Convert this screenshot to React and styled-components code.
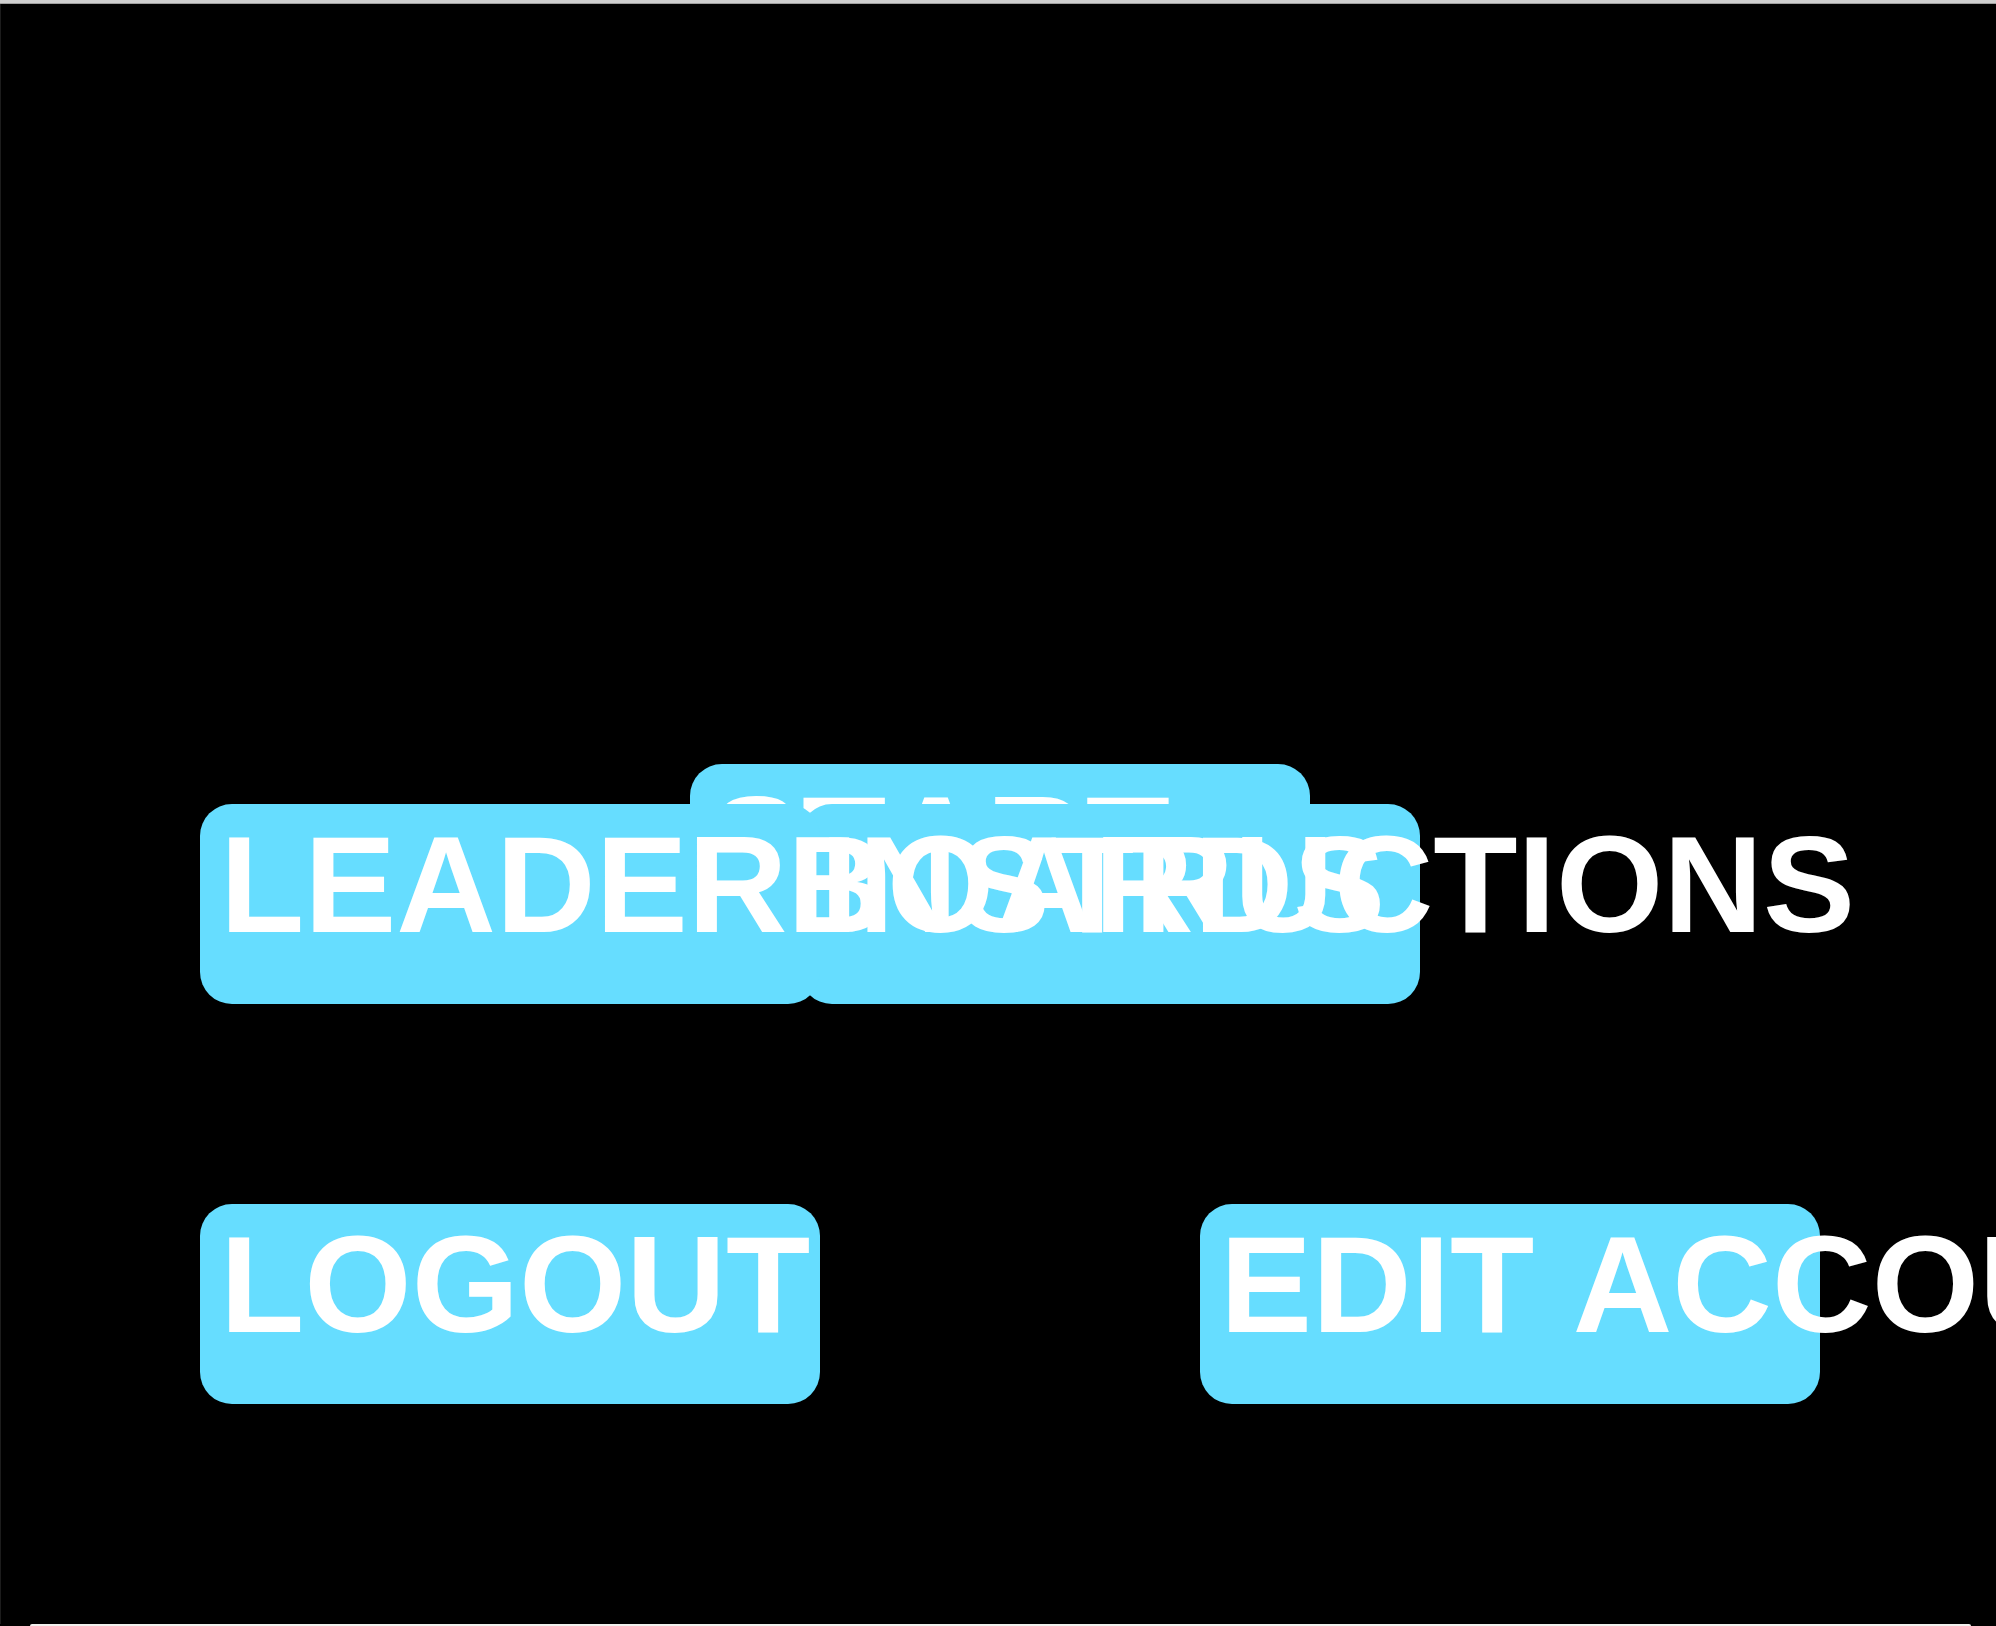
import React from "react";
import styled, { createGlobalStyle } from "styled-components";

const GlobalStyle = createGlobalStyle`
  * { box-sizing: border-box; }
  body { margin: 0; background: #000; }
`;

const Window = styled.div`
  display: flex;
  flex-direction: column;
  min-height: 100vh;
  overflow: hidden;
  background: #000;
`;

const TitleEdge = styled.header`
  height: 4px;
  flex: none;
  background: #d0d0d0;
  border-bottom: 1px solid #a0a0a0;
`;

const Menu = styled.main`
  flex: 1;
  display: grid;
  grid-template-columns: 199px 490px 110px 400px 1fr;
  grid-template-rows: 760px 40px 400px 1fr;
  border-left: 1px solid #1c1c1c;
`;

const MenuButton = styled.button`
  grid-column: ${(p) => p.$column};
  grid-row: ${(p) => p.$row};
  width: 620px;
  height: 200px;
  display: flex;
  align-items: flex-start;
  padding: 0 20px;
  border: 0;
  border-radius: 32px;
  background: #66ddff;
  color: #fff;
  font: bold 138px/160px "Liberation Sans", Arial, sans-serif;
  font-kerning: none;
  text-align: left;
  white-space: nowrap;
  cursor: pointer;
`;

const DockEdge = styled.footer`
  height: 2px;
  flex: none;
  margin: 0 25px 0 30px;
  border-radius: 2px 2px 0 0;
  background: #f2f0ee;
`;

/* Painted in order: later entries cover the earlier ones where they overlap. */
const items = [
  { label: "START", column: 3, row: 2 },
  { label: "INSTRUCTIONS", column: 4, row: 3 },
  { label: "LEADERBOARDS", column: 2, row: 3 },
  { label: "LOGOUT", column: 2, row: 4 },
  { label: "EDIT ACCOUNT", column: 5, row: 4 },
];

export default function App() {
  return (
    <Window>
      <GlobalStyle />
      <TitleEdge />
      <Menu>
        {items.map((item) => (
          <MenuButton key={item.label} type="button" $column={item.column} $row={item.row}>
            {item.label}
          </MenuButton>
        ))}
      </Menu>
      <DockEdge />
    </Window>
  );
}
